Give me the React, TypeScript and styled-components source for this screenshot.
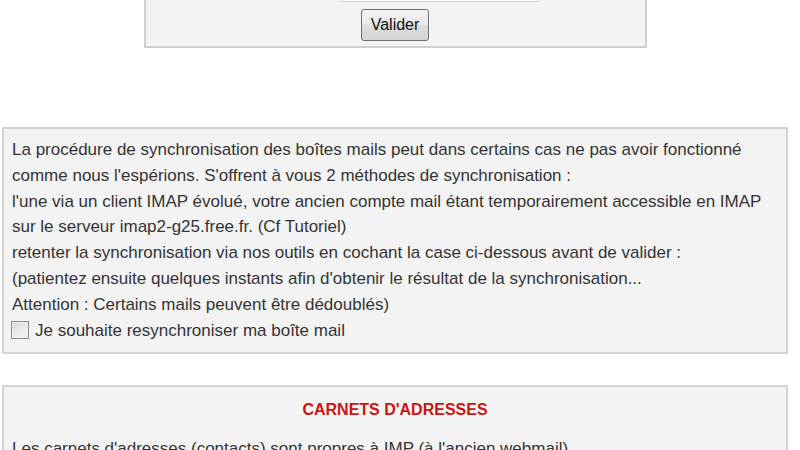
import React from "react";
import styled, { createGlobalStyle } from "styled-components";

const GlobalStyle = createGlobalStyle`
  html, body {
    margin: 0;
    padding: 0;
    background: #ffffff;
  }
  body {
    font-family: "Liberation Sans", Arial, sans-serif;
    color: #333333;
    overflow: hidden;
  }
`;

const Page = styled.div`
  width: 786px;
  margin: -35px 0 0 2px;
`;

const FormBox = styled.div`
  width: 499px;
  margin: 0 auto;
  background: #f3f3f3;
  border: 2px solid #cfcfcf;
  border-top: none;
  display: flex;
  flex-direction: column;
  align-items: center;
  padding: 0 0 5px;
`;

const TextInput = styled.input`
  width: 198px;
  height: 37px;
  margin: 0 0 7px 88px;
  box-sizing: border-box;
  border: 1px solid #c9d4e0;
  background: #ffffff;
`;

const Button = styled.button`
  height: 32px;
  width: 68px;
  padding: 0;
  font-family: "Liberation Sans", Arial, sans-serif;
  font-size: 16px;
  color: #111111;
  border: 1px solid #707070;
  border-radius: 3px;
  background: linear-gradient(#f4f4f4 0%, #e8e8e8 50%, #dcdcdc 51%, #d4d4d4 100%);
`;

const Panel = styled.div<{ $gap: number }>`
  margin-top: ${(p) => p.$gap}px;
  background: #f3f3f3;
  border: 2px solid #d2d2d2;
  padding: 8px 8px 9px;
  font-size: 17px;
  line-height: 25.8px;
`;

const Line = styled.div`
  white-space: nowrap;
`;

const CheckRow = styled.label`
  display: flex;
  align-items: center;
  gap: 6px;
`;

const Box = styled.span`
  width: 16px;
  height: 16px;
  border: 1px solid #8a8a8a;
  background: linear-gradient(135deg, #d8d8d8, #f8f8f8);
  box-shadow: inset 0 0 0 1px #f0f0f0;
  flex-shrink: 0;
  margin-left: -1px;
`;

const Title = styled.div`
  text-align: center;
  color: #cc1414;
  font-weight: bold;
  font-size: 16px;
  padding: 2px 0 13px;
`;

export default function App() {
  return (
    <>
      <GlobalStyle />
      <Page>
        <FormBox>
          <TextInput />
          <Button>Valider</Button>
        </FormBox>
        <Panel $gap={79}>
          <Line>La procédure de synchronisation des boîtes mails peut dans certains cas ne pas avoir fonctionné</Line>
          <Line>comme nous l'espérions. S'offrent à vous 2 méthodes de synchronisation :</Line>
          <Line>l'une via un client IMAP évolué, votre ancien compte mail étant temporairement accessible en IMAP</Line>
          <Line>sur le serveur imap2-g25.free.fr. (Cf Tutoriel)</Line>
          <Line>retenter la synchronisation via nos outils en cochant la case ci-dessous avant de valider :</Line>
          <Line>(patientez ensuite quelques instants afin d'obtenir le résultat de la synchronisation...</Line>
          <Line>Attention : Certains mails peuvent être dédoublés)</Line>
          <CheckRow>
            <Box />
            <span>Je souhaite resynchroniser ma boîte mail</span>
          </CheckRow>
        </Panel>
        <Panel $gap={31}>
          <Title>CARNETS D'ADRESSES</Title>
          <Line>Les carnets d'adresses (contacts) sont propres à IMP (à l'ancien webmail).</Line>
        </Panel>
      </Page>
    </>
  );
}
